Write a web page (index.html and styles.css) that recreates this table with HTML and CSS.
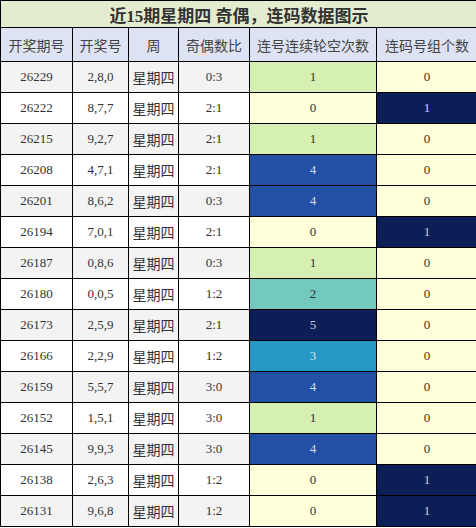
FILE: index.html
```html
<!DOCTYPE html>
<html lang="zh">
<head>
  <meta charset="UTF-8">
  <title>近15期星期四 奇偶，连码数据图示</title>
  <link rel="stylesheet" href="styles.css">
</head>
<body>
  <table class="data">
    <colgroup>
      <col class="c1"><col class="c2"><col class="c3"><col class="c4"><col class="c5"><col class="c6">
    </colgroup>
    <tr class="title"><td colspan="6">近15期星期四 奇偶，连码数据图示</td></tr>
    <tr class="head">
      <td>开奖期号</td><td>开奖号</td><td>周</td><td>奇偶数比</td><td>连号连续轮空次数</td><td>连码号组个数</td>
    </tr>
    <tr class="odd"><td>26229</td><td>2,8,0</td><td class="wk">星期四</td><td>0:3</td><td class="v1">1</td><td class="v0">0</td></tr>
    <tr><td>26222</td><td>8,7,7</td><td class="wk">星期四</td><td>2:1</td><td class="v0">0</td><td class="v5">1</td></tr>
    <tr class="odd"><td>26215</td><td>9,2,7</td><td class="wk">星期四</td><td>2:1</td><td class="v1">1</td><td class="v0">0</td></tr>
    <tr><td>26208</td><td>4,7,1</td><td class="wk">星期四</td><td>2:1</td><td class="v4">4</td><td class="v0">0</td></tr>
    <tr class="odd"><td>26201</td><td>8,6,2</td><td class="wk">星期四</td><td>0:3</td><td class="v4">4</td><td class="v0">0</td></tr>
    <tr><td>26194</td><td>7,0,1</td><td class="wk">星期四</td><td>2:1</td><td class="v0">0</td><td class="v5">1</td></tr>
    <tr class="odd"><td>26187</td><td>0,8,6</td><td class="wk">星期四</td><td>0:3</td><td class="v1">1</td><td class="v0">0</td></tr>
    <tr><td>26180</td><td>0,0,5</td><td class="wk">星期四</td><td>1:2</td><td class="v2">2</td><td class="v0">0</td></tr>
    <tr class="odd"><td>26173</td><td>2,5,9</td><td class="wk">星期四</td><td>2:1</td><td class="v5">5</td><td class="v0">0</td></tr>
    <tr><td>26166</td><td>2,2,9</td><td class="wk">星期四</td><td>1:2</td><td class="v3">3</td><td class="v0">0</td></tr>
    <tr class="odd"><td>26159</td><td>5,5,7</td><td class="wk">星期四</td><td>3:0</td><td class="v4">4</td><td class="v0">0</td></tr>
    <tr><td>26152</td><td>1,5,1</td><td class="wk">星期四</td><td>3:0</td><td class="v1">1</td><td class="v0">0</td></tr>
    <tr class="odd"><td>26145</td><td>9,9,3</td><td class="wk">星期四</td><td>3:0</td><td class="v4">4</td><td class="v0">0</td></tr>
    <tr><td>26138</td><td>2,6,3</td><td class="wk">星期四</td><td>1:2</td><td class="v0">0</td><td class="v5">1</td></tr>
    <tr class="odd"><td>26131</td><td>9,6,8</td><td class="wk">星期四</td><td>1:2</td><td class="v0">0</td><td class="v5">1</td></tr>
  </table>
</body>
</html>
```

FILE: styles.css
```css
body {
  margin: 0;
  background: #fff;
}
.data {
  border-collapse: collapse;
  table-layout: fixed;
  width: 477px;
  font-family: "Liberation Serif", "Noto Sans CJK SC", serif;
  font-size: 13px;
  color: #333;
}
.c1 { width: 72px; }
.c2 { width: 56px; }
.c3 { width: 50px; }
.c4 { width: 71px; }
.c5 { width: 127px; }
.c6 { width: 101px; }
.data td {
  border: 1.5px solid #000;
  text-align: center;
  padding: 0;
  height: 30px;
  background: #fff;
}
.data .title td {
  height: 26px;
  background: #e4ecd0;
  font-size: 17px;
  font-weight: bold;
  color: #333;
}
.data .head td {
  height: 33px;
  background: #dde3f3;
  font-family: "Noto Sans CJK SC", sans-serif;
  font-size: 14px;
  color: #444;
}
.data .odd td { background: #f3f3f3; }
.data td.wk {
  font-family: "Noto Sans CJK SC", sans-serif;
  font-size: 14px;
}
.data tr td.v0 { background: #ffffd9; }
.data tr td.v1 { background: #d6f0b4; }
.data tr td.v2 { background: #73c9be; }
.data tr td.v3 { background: #2598c4; color: #dde; }
.data tr td.v4 { background: #2150a4; color: #dde; }
.data tr td.v5 { background: #0c1e58; color: #ccd; }
```
